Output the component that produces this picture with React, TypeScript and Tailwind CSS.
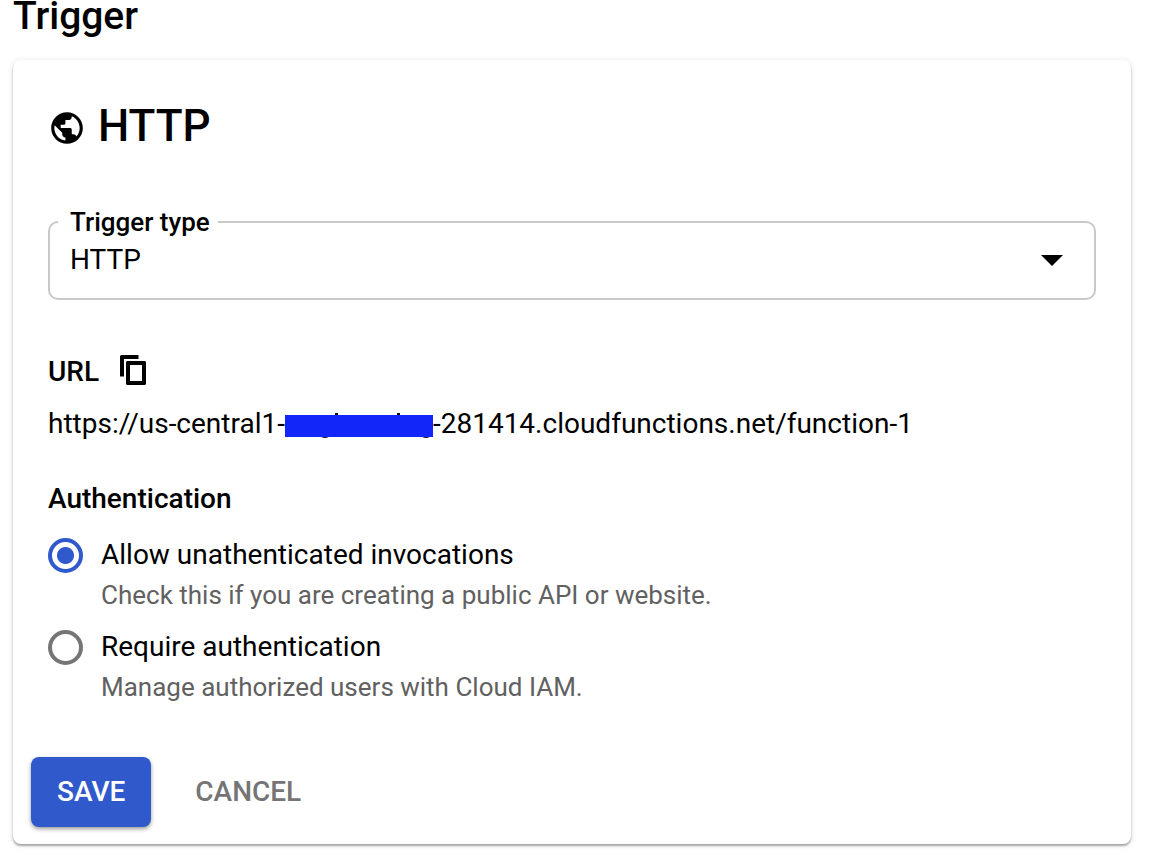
import { useState } from "react";
import { MdPublic } from "react-icons/md";

type AuthOption = { id: string; label: string; hint: string };

const authOptions: AuthOption[] = [
  {
    id: "allow",
    label: "Allow unathenticated invocations",
    hint: "Check this if you are creating a public API or website.",
  },
  {
    id: "require",
    label: "Require authentication",
    hint: "Manage authorized users with Cloud IAM.",
  },
];

function CopyIcon() {
  return (
    <svg viewBox="0 0 28 32" className="h-8 w-7" aria-hidden="true">
      <path
        d="M19.500 1H2.500Q1 1 1 2.500V22.500H5V5H19.500Z"
        fill="#000"
      />
      <path
        fillRule="evenodd"
        d="M8.500 7H25.500Q27 7 27 8.500V29.500Q27 31 25.500 31H8.500Q7 31 7 29.500V8.500Q7 7 8.500 7ZM11 11V27H23V11Z"
        fill="#000"
      />
    </svg>
  );
}

/* Marker bar that hides the project name, with the letter tips left showing. */
function RedactedName() {
  return (
    <svg
      viewBox="0 0 148 32"
      className="h-8 w-[148px] shrink-0"
      role="img"
      aria-label="redacted"
    >
      <rect x="50" y="5" width="3" height="4" fill="#111" />
      <rect x="112" y="5" width="3" height="4" fill="#111" />
      <ellipse cx="40" cy="27" rx="5" ry="3" fill="#111" />
      <ellipse cx="141" cy="27" rx="5" ry="3" fill="#111" />
      <rect x="0" y="7" width="148" height="22" fill="#1226fa" />
    </svg>
  );
}

export default function App() {
  const [auth, setAuth] = useState("allow");

  return (
    <main className="bg-white pr-[27px] pb-[18px] pl-[13px] font-['Roboto',sans-serif] text-[28px] leading-10 text-black">
      <h1 className="text-[39px] leading-8 font-medium">Trigger</h1>

      <section className="mt-7 rounded-lg bg-white px-[35px] pt-10 pb-[17px] shadow-[0_2px_2px_rgba(0,0,0,0.3),0_1px_6px_rgba(0,0,0,0.12)]">
        <h2 className="flex items-center gap-3 text-[44px] leading-[52px] font-medium">
          <MdPublic className="mt-1 size-[38px]" aria-hidden="true" />
          HTTP
        </h2>

        <fieldset className="mt-[54px] rounded-[10px] border-2 border-[#c9c9c9]">
          <legend className="ml-2 px-3 pr-2 text-[26px] leading-8 font-medium">
            <label htmlFor="trigger-type">Trigger type</label>
          </legend>
          <div className="grid items-center">
            <select
              id="trigger-type"
              className="col-start-1 row-start-1 h-15 w-full appearance-none bg-transparent pb-4 pl-5"
            >
              <option>HTTP</option>
            </select>
            <svg
              viewBox="0 0 22 12"
              className="pointer-events-none col-start-1 row-start-1 mr-[31px] mb-4 h-3 w-[22px] justify-self-end"
              aria-hidden="true"
            >
              <path d="M0 1H22L11 12Z" fill="#000" />
            </svg>
          </div>
        </fieldset>

        <div className="mt-[52px] flex items-center gap-5">
          <h3 className="font-medium">URL</h3>
          <button type="button" aria-label="Copy URL" className="pb-1">
            <CopyIcon />
          </button>
        </div>
        <p className="mt-3 flex items-center">
          https://us-central1-
          <RedactedName />
          -281414.cloudfunctions.net/function-1
        </p>

        <h3 id="auth-title" className="mt-[35px] font-medium">
          Authentication
        </h3>
        <div
          role="radiogroup"
          aria-labelledby="auth-title"
          className="mt-4 flex flex-col gap-3"
        >
          {authOptions.map((option) => (
            <div key={option.id} className="flex gap-[18px]">
              <input
                type="radio"
                id={option.id}
                name="auth"
                checked={auth === option.id}
                onChange={() => setAuth(option.id)}
                aria-describedby={`${option.id}-hint`}
                className="mt-[3px] size-[35px] shrink-0 appearance-none rounded-full border-4 border-[#757575] checked:border-[#3059cb] checked:bg-[radial-gradient(circle,#3059cb_8px,transparent_9px)]"
              />
              <div>
                <label htmlFor={option.id} className="block">
                  {option.label}
                </label>
                <p id={`${option.id}-hint`} className="text-[26px] text-[#616161]">
                  {option.hint}
                </p>
              </div>
            </div>
          ))}
        </div>

        <div className="mt-[50px] -ml-[17px] flex gap-[18px] font-medium">
          <button
            type="button"
            className="h-[70px] rounded-lg bg-[#3059cb] px-[26px] text-white shadow-[0_2px_4px_rgba(0,0,0,0.4)]"
          >
            SAVE
          </button>
          <button type="button" className="h-[70px] rounded-lg px-[26px] text-[#757575]">
            CANCEL
          </button>
        </div>
      </section>
    </main>
  );
}
